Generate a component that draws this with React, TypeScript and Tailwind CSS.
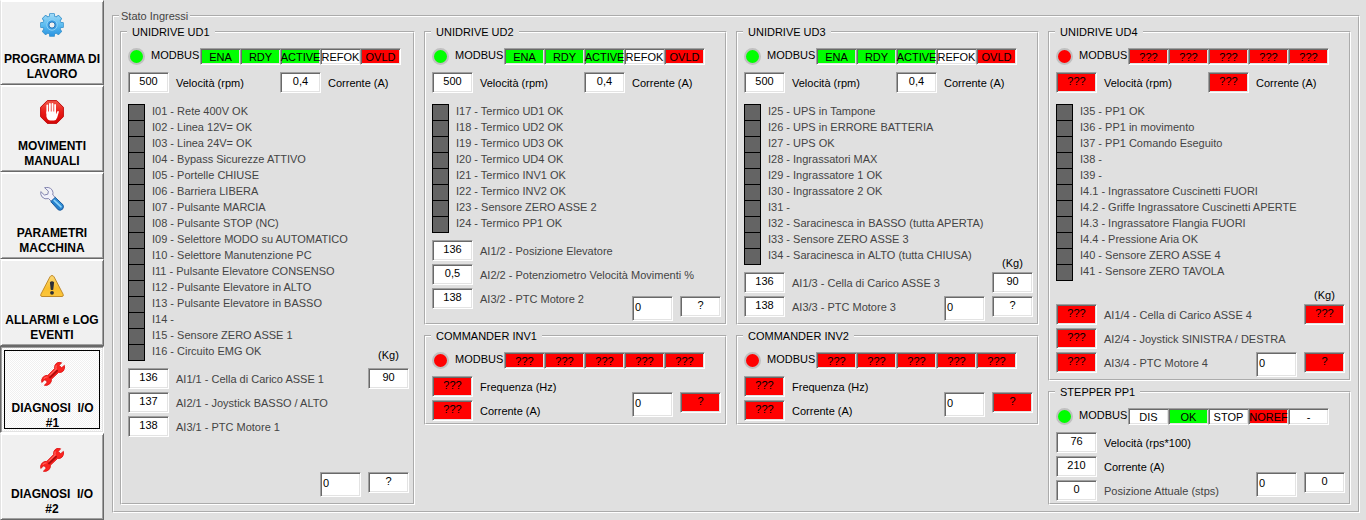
import React, { useId } from "react";

type Tone = "green" | "red" | "white";
type Flag = { text: string; tone: Tone };

const toneClass: Record<Tone, string> = {
  green: "bg-[#00ff00]",
  red: "bg-[#ff0000]",
  white: "bg-white",
};

const sunken =
  "border border-t-[#a0a0a0] border-l-[#a0a0a0] border-r-white border-b-white shadow-[inset_1px_1px_0_#696969,inset_-1px_-1px_0_#e3e3e3]";

function flags(spec: string): Flag[] {
  const tones: Record<string, Tone> = { g: "green", r: "red", w: "white" };
  return spec.split(" ").map((part) => ({ tone: tones[part[0]], text: part.slice(2) }));
}

const driveFlags = flags("g:ENA g:RDY g:ACTIVE w:REFOK r:OVLD");
const offlineFlags = flags("r:??? r:??? r:??? r:??? r:???");
const stepperFlags = flags("w:DIS g:OK w:STOP r:NOREF w:-");

/* ---------- Toolbar icons ---------- */

function GearIcon() {
  const teeth = [0, 45, 90, 135, 180, 225, 270, 315];
  return (
    <svg width="24" height="24" viewBox="0 0 24 24" aria-hidden="true">
      <defs>
        <linearGradient id="gearFill" x1="0" y1="0" x2="0" y2="24" gradientUnits="userSpaceOnUse">
          <stop offset="0" stopColor="#a6dcf6" />
          <stop offset="0.5" stopColor="#5cbcf0" />
          <stop offset="1" stopColor="#2590e0" />
        </linearGradient>
      </defs>
      <g fill="#3f97cf" stroke="#3f97cf" strokeWidth="1.2" strokeLinejoin="round">
        {teeth.map((a) => (
          <path key={a} d="M9.2 5 L9.8 .8 H14.2 L14.8 5 Z" transform={`rotate(${a} 12 12)`} />
        ))}
        <circle cx="12" cy="12" r="8.8" />
      </g>
      <g fill="url(#gearFill)">
        <path d="M9.4 6 L10 1 H14 L14.6 6 Z" />
        <path d="M9.4 18 L10 23 H14 L14.6 18 Z" />
        <path d="M6 9.4 L1 10 V14 L6 14.6 Z" />
        <path d="M18 9.4 L23 10 V14 L18 14.6 Z" />
        <path d="M5.9 9.6 L2.8 5.6 L5.6 2.8 L9.6 5.9 Z" />
        <path d="M18.1 9.6 L21.2 5.6 L18.4 2.8 L14.4 5.9 Z" />
        <path d="M5.9 14.4 L2.8 18.4 L5.6 21.2 L9.6 18.1 Z" />
        <path d="M18.1 14.4 L21.2 18.4 L18.4 21.2 L14.4 18.1 Z" />
        <circle cx="12" cy="12" r="8.8" />
      </g>
      <circle cx="12" cy="12" r="5.2" fill="#3fa3e8" stroke="#8fd3f7" strokeWidth="1" />
      <circle cx="12" cy="12" r="3.1" fill="#f0f0f0" stroke="#2173b8" strokeWidth="1" />
    </svg>
  );
}

function StopHandIcon() {
  return (
    <svg width="24" height="24" viewBox="0 0 24 24" aria-hidden="true">
      <defs>
        <linearGradient id="stopFill" x1="0" y1="0" x2="0" y2="1">
          <stop offset="0" stopColor="#f0584a" />
          <stop offset="0.5" stopColor="#ea1c18" />
          <stop offset="1" stopColor="#d40606" />
        </linearGradient>
      </defs>
      <path d="M7.3 .6 H16.7 L23.4 7.3 V16.7 L16.7 23.4 H7.3 L.6 16.7 V7.3 Z" fill="url(#stopFill)" stroke="#c01010" />
      <g stroke="#fff" strokeWidth="1.8" strokeLinecap="round" fill="none">
        <path d="M7.3 5.4 V13" />
        <path d="M9.9 4 V13" />
        <path d="M12.5 4 V13" />
        <path d="M15.1 5 V14" />
      </g>
      <path d="M6.4 11.6 H16 V14.6 L17.2 11.6 Q18.4 10.4 18.9 11.8 L17.2 17.6 Q16.2 20.6 14 20.6 H10.4 Q7.4 20.2 6.4 16.4 Z" fill="#fff" />
    </svg>
  );
}

function ToolIcon() {
  return (
    <svg width="24" height="24" viewBox="0 0 24 24" aria-hidden="true">
      <defs>
        <linearGradient id="handleFill" x1="0" y1="1" x2="1" y2="0">
          <stop offset="0" stopColor="#1767b8" />
          <stop offset="1" stopColor="#3fa6ea" />
        </linearGradient>
      </defs>
      <path
        d="M4.6 .7 Q9.4 -.4 12 2.8 Q13.6 5.2 12.8 8 L16 11.2 L12 15 L8.6 11.6 Q4.6 12.8 2 9.9 Q.2 7.4 .8 4.6 L4.4 8 L7.8 7.2 L8.4 4.2 Z"
        fill="#f1f1fa"
        stroke="#8486b0"
        strokeWidth="1"
        strokeLinejoin="round"
      />
      <path
        d="M10.8 14.6 L15.2 10.4 L23 17.8 Q24 20.2 22.5 22.2 Q20.4 24 18.2 22.8 Z"
        fill="url(#handleFill)"
        stroke="#15589c"
        strokeWidth="1"
        strokeLinejoin="round"
      />
      <path d="M14.2 13.4 L21 19.8" stroke="#8fd4fa" strokeWidth="1.6" strokeLinecap="round" />
    </svg>
  );
}

function WarningIcon() {
  return (
    <svg width="24" height="24" viewBox="0 0 24 24" aria-hidden="true">
      <defs>
        <linearGradient id="warnFill" x1="0" y1="0" x2="0" y2="1">
          <stop offset="0" stopColor="#fbd977" />
          <stop offset="0.6" stopColor="#f9bf2e" />
          <stop offset="1" stopColor="#fcc63c" />
        </linearGradient>
      </defs>
      <path
        d="M12 1.6 Q13.4 1.6 14 2.8 L23.2 20.4 Q23.8 22.5 22 22.5 H2 Q.2 22.5 .8 20.4 L10 2.8 Q10.6 1.6 12 1.6 Z"
        fill="url(#warnFill)"
        stroke="#c08a2a"
      />
      <path d="M9.9 8.2 Q12 6.2 14.1 8.2 L13.3 15.4 Q12 16.6 10.7 15.4 Z" fill="#2d3038" />
      <circle cx="12" cy="18.8" r="1.9" fill="#2d3038" />
    </svg>
  );
}

function RedWrenchIcon() {
  return (
    <svg width="24" height="24" viewBox="0 0 24 24" aria-hidden="true">
      <path
        d="M15.8 1 Q18 -.2 20.6 .8 L18.2 3.4 L20.6 5.8 L23.4 3.4 Q24.2 6.8 22.2 9 Q20.2 11 17.6 10.4 L10.4 17.2 Q10.8 20 8.6 22 Q6.4 23.9 3.4 23.2 L6 20.6 L5.6 18.4 L3.4 18 L.8 20.4 Q0 17.2 2.2 15 Q4.2 13 6.8 13.4 L13.6 6.6 Q13 3 15.8 1 Z"
        fill="#fb2420"
        stroke="#e01414"
        strokeWidth="0.9"
        strokeLinejoin="round"
      />
      <path d="M9 15.4 L16 8.8" stroke="#b00c0c" strokeWidth="2" strokeLinecap="round" />
      <path d="M15.4 3.4 Q14.4 5 15.2 7 L8.6 13.4 M2.8 16.6 Q4.4 14.6 6.6 15" stroke="#ff6a60" strokeWidth="1.1" fill="none" />
    </svg>
  );
}

/* ---------- Sidebar ---------- */

type NavItem = { lines: [string, string]; icon: React.ReactNode; size: string; active?: boolean };

const navItems: NavItem[] = [
  { lines: ["PROGRAMMA DI", "LAVORO"], icon: <GearIcon />, size: "h-[85px] pt-3" },
  { lines: ["MOVIMENTI", "MANUALI"], icon: <StopHandIcon />, size: "h-[87px] pt-[14px]" },
  { lines: ["PARAMETRI", "MACCHINA"], icon: <ToolIcon />, size: "h-[87px] pt-[14px]" },
  { lines: ["ALLARMI e LOG", "EVENTI"], icon: <WarningIcon />, size: "h-[87px] pt-[14px]" },
  { lines: ["DIAGNOSI  I/O", "#1"], icon: <RedWrenchIcon />, size: "h-[87px] pt-[15px] pl-px", active: true },
  { lines: ["DIAGNOSI  I/O", "#2"], icon: <RedWrenchIcon />, size: "h-[87px] pt-[14px]" },
];

const raised =
  "bg-[#f0f0f0] border-t-white border-l-[#e3e3e3] border-r-[#696969] border-b-[#696969] shadow-[inset_1px_1px_0_#ffffff,inset_-1px_-1px_0_#a0a0a0]";
const pressed =
  "bg-[repeating-conic-gradient(#ffffff_0_25%,#f0f0f0_0_50%)] bg-[length:2px_2px] border-t-[#696969] border-l-[#696969] border-r-white border-b-white shadow-[inset_1px_1px_0_#a0a0a0,inset_-1px_-1px_0_#e3e3e3] outline-1 -outline-offset-5 outline-black";

function Sidebar() {
  return (
    <nav className="flex w-[104px] shrink-0 flex-col" aria-label="Menu">
      {navItems.map((item) => (
        <button
          key={item.lines.join(" ")}
          type="button"
          aria-pressed={!!item.active}
          className={`flex flex-col items-center border ${item.size} ${item.active ? pressed : raised}`}
        >
          {item.icon}
          <span className="mt-[15px] text-center text-[12px] leading-[15px] font-bold whitespace-pre text-black">
            {item.lines[0]}
            <br />
            {item.lines[1]}
          </span>
        </button>
      ))}
    </nav>
  );
}

/* ---------- Field building blocks ---------- */

function Reading({ id, value, tone = "white", label }: { id?: string; value: string; tone?: Tone; label?: string }) {
  return (
    <input
      id={id}
      aria-label={label}
      readOnly
      value={value}
      className={`h-[21px] w-[41px] shrink-0 pb-[3px] text-center outline-none ${sunken} ${toneClass[tone]}`}
    />
  );
}

function Field({ value, label, tone, muted }: { value: string; label: string; tone?: Tone; muted?: boolean }) {
  const id = useId();
  return (
    <div className="flex items-center gap-[7px]">
      <Reading id={id} value={value} tone={tone} />
      <label htmlFor={id} className={muted ? "whitespace-nowrap text-[#444444]" : "whitespace-nowrap"}>
        {label}
      </label>
    </div>
  );
}

function ModbusRow({ online, items }: { online: boolean; items: Flag[] }) {
  return (
    <div className="flex h-[17px]">
      <div className="w-[23px] shrink-0">
        <div
          className={`size-[17px] rounded-full border-2 border-[#c0c0c0] ${online ? "bg-[#00ff00]" : "bg-[#ff0000]"}`}
        />
      </div>
      <span className="w-[49px] shrink-0 leading-[14px]">MODBUS</span>
      <div className="flex pl-px">
        {items.map((flag, i) => (
          <span
            key={i}
            className={`-ml-px flex h-[17px] w-[41px] justify-center leading-[16px] ${sunken} ${toneClass[flag.tone]}`}
          >
            {flag.text}
          </span>
        ))}
      </div>
    </div>
  );
}

function Lamps({ items }: { items: string[] }) {
  return (
    <ul>
      {items.map((text) => (
        <li key={text} className="flex h-4 gap-[7px] leading-[15px] whitespace-nowrap text-[#444444]">
          <span className="size-[17px] shrink-0 border border-black bg-[#646464]" />
          {text}
        </li>
      ))}
    </ul>
  );
}

function Command({ result, tone, className = "" }: { result: string; tone?: Tone; className?: string }) {
  return (
    <div className={`flex items-start gap-[7px] ${className}`}>
      <input
        aria-label="Comando"
        defaultValue="0"
        className={`h-[25px] w-[41px] bg-white px-[2px] pb-[3px] outline-none ${sunken}`}
      />
      <Reading value={result} tone={tone} label="Risposta" />
    </div>
  );
}

function Weight({ value, tone, gap = "gap-[2px]" }: { value: string; tone?: Tone; gap?: string }) {
  const id = useId();
  return (
    <div className={`flex flex-col items-center ${gap}`}>
      <label htmlFor={id}>(Kg)</label>
      <Reading id={id} value={value} tone={tone} />
    </div>
  );
}

function Panel({ title, grow, children }: { title: string; grow?: boolean; children: React.ReactNode }) {
  return (
    <fieldset
      className={`flex min-w-0 flex-col border-2 border-white pt-[9px] pr-1 pb-[2px] pl-[6px] [border-style:groove] ${grow ? "flex-1" : ""}`}
    >
      <legend className="ml-[-1px] px-[5px]">{title}</legend>
      {children}
    </fieldset>
  );
}

/* Left and right stacks share one grid cell, so long labels may run beneath the right-hand boxes. */
function Body({ left, right, className = "" }: { left: React.ReactNode; right: React.ReactNode; className?: string }) {
  return (
    <div className={`grid flex-1 ${className}`}>
      <div className="col-start-1 row-start-1">{left}</div>
      <div className="col-start-1 row-start-1 flex flex-col items-end justify-end justify-self-end self-end">
        {right}
      </div>
    </div>
  );
}

function SpeedRow({ speed, current, tone }: { speed: string; current: string; tone?: Tone }) {
  return (
    <div className="mt-[7px] flex">
      <div className="w-[152px] shrink-0">
        <Field value={speed} label="Velocità (rpm)" tone={tone} />
      </div>
      <Field value={current} label="Corrente (A)" tone={tone} />
    </div>
  );
}

function Commander({ title }: { title: string }) {
  return (
    <Panel title={title}>
      <ModbusRow online={false} items={offlineFlags} />
      <Body
        className="mt-[7px]"
        left={
          <div className="flex flex-col gap-[3px]">
            <Field value="???" tone="red" label="Frequenza (Hz)" />
            <Field value="???" tone="red" label="Corrente (A)" />
          </div>
        }
        right={<Command result="?" tone="red" className="mb-1" />}
      />
    </Panel>
  );
}

const ud1 = [
  "I01 - Rete 400V OK",
  "I02 - Linea 12V= OK",
  "I03 - Linea 24V= OK",
  "I04 - Bypass Sicurezze ATTIVO",
  "I05 - Portelle CHIUSE",
  "I06 - Barriera LIBERA",
  "I07 - Pulsante MARCIA",
  "I08 - Pulsante STOP (NC)",
  "I09 - Selettore MODO su AUTOMATICO",
  "I10 - Selettore Manutenzione PC",
  "I11 - Pulsante Elevatore CONSENSO",
  "I12 - Pulsante Elevatore in ALTO",
  "I13 - Pulsante Elevatore in BASSO",
  "I14 -",
  "I15 - Sensore ZERO ASSE 1",
  "I16 - Circuito EMG OK",
];

const ud2 = [
  "I17 - Termico UD1 OK",
  "I18 - Termico UD2 OK",
  "I19 - Termico UD3 OK",
  "I20 - Termico UD4 OK",
  "I21 - Termico INV1 OK",
  "I22 - Termico INV2 OK",
  "I23 - Sensore ZERO ASSE 2",
  "I24 - Termico PP1 OK",
];

const ud3 = [
  "I25 - UPS in Tampone",
  "I26 - UPS in ERRORE BATTERIA",
  "I27 - UPS OK",
  "I28 - Ingrassatori MAX",
  "I29 - Ingrassatore 1 OK",
  "I30 - Ingrassatore 2 OK",
  "I31 -",
  "I32 - Saracinesca in BASSO (tutta APERTA)",
  "I33 - Sensore ZERO ASSE 3",
  "I34 - Saracinesca in ALTO (tutta CHIUSA)",
];

const ud4 = [
  "I35 - PP1 OK",
  "I36 - PP1 in movimento",
  "I37 - PP1 Comando Eseguito",
  "I38 -",
  "I39 -",
  "I4.1 - Ingrassatore Cuscinetti FUORI",
  "I4.2 - Griffe Ingrassatore Cuscinetti APERTE",
  "I4.3 - Ingrassatore Flangia FUORI",
  "I4.4 - Pressione Aria OK",
  "I40 - Sensore ZERO ASSE 4",
  "I41 - Sensore ZERO TAVOLA",
];

export default function App() {
  return (
    <div className="flex min-h-screen bg-[#e0e0e0] font-['Liberation_Sans',Arial,sans-serif] text-[11px] leading-[14px] text-black">
      <Sidebar />
      <main className="flex min-w-0 flex-1 pt-[9px] pr-[6px] pb-[7px] pl-2">
        <fieldset className="grid min-w-0 flex-1 grid-cols-[295fr_303fr_303fr_303fr] gap-[9px] border-2 border-white pt-[2px] pr-[7px] pb-[6px] pl-[6px] [border-style:groove]">
          <legend className="ml-[-1px] px-[2px] text-[#444444]">Stato Ingressi</legend>

          <div className="flex min-w-0 flex-col">
            <Panel title="UNIDRIVE UD1" grow>
              <ModbusRow online items={driveFlags} />
              <SpeedRow speed="500" current="0,4" />
              <Body
                className="mt-[11px]"
                left={
                  <>
                    <Lamps items={ud1} />
                    <div className="mt-2 flex flex-col gap-[3px]">
                      <Field muted value="136" label="AI1/1 - Cella di Carico ASSE 1" />
                      <Field muted value="137" label="AI2/1 - Joystick BASSO / ALTO" />
                      <Field muted value="138" label="AI3/1 - PTC Motore 1" />
                    </div>
                  </>
                }
                right={
                  <>
                    <Weight value="90" gap="gap-[6px]" />
                    <Command result="?" className="mt-[83px] mb-1" />
                  </>
                }
              />
            </Panel>
          </div>

          <div className="flex min-w-0 flex-col gap-1">
            <Panel title="UNIDRIVE UD2">
              <ModbusRow online items={driveFlags} />
              <SpeedRow speed="500" current="0,4" />
              <Body
                className="mt-[11px]"
                left={
                  <>
                    <Lamps items={ud2} />
                    <div className="mt-2 mb-3 flex flex-col gap-[3px]">
                      <Field muted value="136" label="AI1/2 - Posizione Elevatore" />
                      <Field muted value="0,5" label="AI2/2 - Potenziometro Velocità Movimenti %" />
                      <Field muted value="138" label="AI3/2 - PTC Motore 2" />
                    </div>
                  </>
                }
                right={<Command result="?" />}
              />
            </Panel>
            <Commander title="COMMANDER INV1" />
          </div>

          <div className="flex min-w-0 flex-col gap-1">
            <Panel title="UNIDRIVE UD3">
              <ModbusRow online items={driveFlags} />
              <SpeedRow speed="500" current="0,4" />
              <Body
                className="mt-[11px]"
                left={
                  <>
                    <Lamps items={ud3} />
                    <div className="mt-2 mb-1 flex flex-col gap-[3px]">
                      <Field muted value="136" label="AI1/3 - Cella di Carico ASSE 3" />
                      <Field muted value="138" label="AI3/3 - PTC Motore 3" />
                    </div>
                  </>
                }
                right={
                  <>
                    <Weight value="90" />
                    <Command result="?" className="mt-[3px]" />
                  </>
                }
              />
            </Panel>
            <Commander title="COMMANDER INV2" />
          </div>

          <div className="flex min-w-0 flex-col gap-1">
            <Panel title="UNIDRIVE UD4">
              <ModbusRow online={false} items={offlineFlags} />
              <SpeedRow speed="???" current="???" tone="red" />
              <Body
                className="mt-[11px]"
                left={
                  <>
                    <Lamps items={ud4} />
                    <div className="mt-6 mb-1 flex flex-col gap-[3px]">
                      <Field muted value="???" tone="red" label="AI1/4 - Cella di Carico ASSE 4" />
                      <Field muted value="???" tone="red" label="AI2/4 - Joystick SINISTRA / DESTRA" />
                      <Field muted value="???" tone="red" label="AI3/4 - PTC Motore 4" />
                    </div>
                  </>
                }
                right={
                  <>
                    <Weight value="???" tone="red" />
                    <Command result="?" tone="red" className="mt-[27px]" />
                  </>
                }
              />
            </Panel>
            <Panel title="STEPPER PP1">
              <ModbusRow online items={stepperFlags} />
              <Body
                className="mt-[7px]"
                left={
                  <div className="flex flex-col gap-[3px]">
                    <Field value="76" label="Velocità (rps*100)" />
                    <Field value="210" label="Corrente (A)" />
                    <Field muted value="0" label="Posizione Attuale (stps)" />
                  </div>
                }
                right={<Command result="0" className="mb-1" />}
              />
            </Panel>
          </div>
        </fieldset>
      </main>
    </div>
  );
}
